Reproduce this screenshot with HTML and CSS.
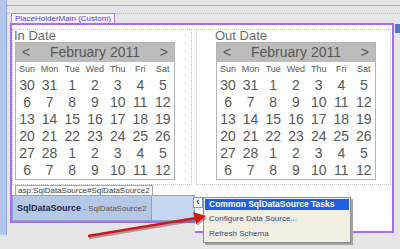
FILE: index.html
```html
<!DOCTYPE html>
<html lang="en">
<head>
    <meta charset="UTF-8">
    <title>Designer - PlaceHolderMain</title>
    <link rel="stylesheet" href="styles.css">
</head>
<body>
    <div class="desk">
        <div class="rail"></div>
        <div class="surface">
            <div class="ruler"></div>
            <div class="outer">
                <div class="ph-tab">PlaceHolderMain (Custom)</div>
                <div class="ph">
                    <div class="ph-body">
                        <div class="cell cell-in">
                            <div class="label">In Date</div>
                            <table class="cal">
                                <tr class="cal-head"><td colspan="7"><div class="cal-title"><span>&lt;</span><span>February 2011</span><span>&gt;</span></div></td></tr>
                                <tr class="cal-days"><td>Sun</td><td>Mon</td><td>Tue</td><td>Wed</td><td>Thu</td><td>Fri</td><td>Sat</td></tr>
                                <tr><td>30</td><td>31</td><td>1</td><td>2</td><td>3</td><td>4</td><td>5</td></tr>
                                <tr><td>6</td><td>7</td><td>8</td><td>9</td><td>10</td><td>11</td><td>12</td></tr>
                                <tr><td>13</td><td>14</td><td>15</td><td>16</td><td>17</td><td>18</td><td>19</td></tr>
                                <tr><td>20</td><td>21</td><td>22</td><td>23</td><td>24</td><td>25</td><td>26</td></tr>
                                <tr><td>27</td><td>28</td><td>1</td><td>2</td><td>3</td><td>4</td><td>5</td></tr>
                                <tr><td>6</td><td>7</td><td>8</td><td>9</td><td>10</td><td>11</td><td>12</td></tr>
                            </table>
                        </div>
                        <div class="cell cell-out">
                            <div class="label">Out Date</div>
                            <table class="cal">
                                <tr class="cal-head"><td colspan="7"><div class="cal-title"><span>&lt;</span><span>February 2011</span><span>&gt;</span></div></td></tr>
                                <tr class="cal-days"><td>Sun</td><td>Mon</td><td>Tue</td><td>Wed</td><td>Thu</td><td>Fri</td><td>Sat</td></tr>
                                <tr><td>30</td><td>31</td><td>1</td><td>2</td><td>3</td><td>4</td><td>5</td></tr>
                                <tr><td>6</td><td>7</td><td>8</td><td>9</td><td>10</td><td>11</td><td>12</td></tr>
                                <tr><td>13</td><td>14</td><td>15</td><td>16</td><td>17</td><td>18</td><td>19</td></tr>
                                <tr><td>20</td><td>21</td><td>22</td><td>23</td><td>24</td><td>25</td><td>26</td></tr>
                                <tr><td>27</td><td>28</td><td>1</td><td>2</td><td>3</td><td>4</td><td>5</td></tr>
                                <tr><td>6</td><td>7</td><td>8</td><td>9</td><td>10</td><td>11</td><td>12</td></tr>
                            </table>
                        </div>
                    </div>
                    <div class="ph-foot">
                        <div class="ds">
                            <div class="ds-tab">asp:SqlDataSource#SqlDataSource2</div>
                            <div class="ds-box">
                                <div class="ds-name"><b>SqlDataSource</b> - SqlDataSource2</div>
                            </div>
                        </div>
                        <div class="ph-rest"></div>
                    </div>
                </div>
            </div>
        </div>
    </div>

    <div class="edge-tag"></div>
    <div class="smart-tag">&lsaquo;</div>

    <div class="tasks">
        <div class="tasks-title">Common SqlDataSource Tasks</div>
        <div class="tasks-item">Configure Data Source...</div>
        <div class="tasks-item">Refresh Schema</div>
    </div>

    <svg class="arrow" width="400" height="249" viewBox="0 0 400 249">
        <g transform="translate(1 2)" fill="#6a5050" stroke="#6a5050" opacity="0.5">
            <line x1="88" y1="236" x2="196" y2="218" stroke-width="2.5"/>
            <polygon points="206,216 193,212 196,224" stroke="none"/>
        </g>
        <g fill="#d31616" stroke="#d31616">
            <line x1="88" y1="236" x2="196" y2="218" stroke-width="2.5"/>
            <polygon points="206,216 193,212 196,224" stroke="none"/>
        </g>
    </svg>
</body>
</html>
```

FILE: styles.css
```css
body {
    margin: 0;
    width: 400px;
    height: 249px;
    overflow: hidden;
    background-color: #e6e6e6;
    font-family: "Liberation Sans", Arial, sans-serif;
    position: relative;
}

.desk {
    display: flex;
    height: 249px;
}

.rail {
    width: 6px;
    height: 235px;
    background-color: #b3c7ec;
    border-right: 1px solid #8aa6da;
}

.surface {
    flex: 1;
    padding-top: 5px;
}

.ruler {
    height: 7px;
    border-top: 1px solid #97afdc;
}

.outer {
    display: flex;
    flex-direction: column;
    align-items: flex-start;
    border-top: 1px dotted #bdbdbd;
    padding-left: 3px;
}

.ph-tab {
    margin-top: -1px;
    height: 9px;
    line-height: 9px;
    padding: 0 3px;
    margin-left: 1px;
    font-size: 8px;
    color: #5a3cdc;
    background-color: #f7f4fd;
    border: 1px solid #b07cf2;
    border-bottom: none;
}

/* purple placeholder outline: body on top, stepped foot below */
.ph {
    width: 384px;
}

.ph-body {
    display: flex;
    gap: 4px;
    padding-top: 4px;
    background-color: #fff;
    border: 2px solid #ad6af2;
    border-bottom: none;
}

.ph-foot {
    display: flex;
    align-items: flex-start;
}

.ph-rest {
    flex: 1;
    height: 46px;
    background-color: #fff;
    border-right: 2px solid #ad6af2;
    border-bottom: 2px solid #ad6af2;
}

.cell {
    border: 1px dotted #c6c6c6;
    height: 154px;
}

.cell-in {
    width: 177px;
    padding-left: 1px;
}

.cell-out {
    width: 175px;
    padding-left: 18px;
}

.label {
    font-size: 13px;
    line-height: 12px;
    color: #6a6a6a;
    height: 12px;
}

.cal {
    border-collapse: collapse;
    table-layout: fixed;
    width: 160px;
    margin-left: 1px;
    border: 1px solid #b4b4b4;
    color: #585858;
}

.cal td {
    padding: 0;
    text-align: center;
    font-size: 14px;
    height: 17px;
    line-height: 17px;
}

.cal-head td {
    background-color: #bcbcbc;
    height: 19px;
    line-height: 19px;
}

.cal-title {
    display: flex;
    justify-content: space-between;
    padding: 0 6px;
}

.cal-days td {
    font-size: 9px;
    height: 15px;
    line-height: 15px;
}

.ds {
    width: 183px;
    height: 36px;
    display: flex;
    flex-direction: column;
    align-items: flex-start;
    background-color: #fff;
    border-left: 2px solid #ad6af2;
    border-bottom: 2px solid #ad6af2;
}

.ds-tab {
    margin-left: 3px;
    height: 9px;
    line-height: 9px;
    padding: 0 2px;
    font-size: 8px;
    color: #3a3a3a;
    background-color: #fff;
    border: 1px solid #a8a8a8;
    border-bottom: none;
}

.ds-box {
    width: 181px;
    height: 24px;
    background-color: #c5d7f1;
    border: 1px solid #8fa7cf;
}

.ds-name {
    width: 134px;
    height: 24px;
    line-height: 24px;
    padding-left: 4px;
    font-size: 8px;
    color: #555;
    background-color: #b5c9e6;
    border-right: 1px solid #8c9fbe;
}

.ds-name b {
    font-size: 9px;
    color: #1d2850;
}

.edge-tag {
    position: absolute;
    left: 395px;
    top: 24px;
    width: 5px;
    height: 9px;
    background-color: #4d78d0;
}

.smart-tag {
    position: absolute;
    left: 193px;
    top: 197px;
    width: 8px;
    height: 9px;
    line-height: 8px;
    text-align: center;
    font-size: 10px;
    font-weight: bold;
    color: #334;
    background-color: #fbfbff;
    border: 1px solid #7d98c8;
}

.tasks {
    position: absolute;
    left: 203px;
    top: 197px;
    width: 146px;
    height: 44px;
    background-color: #f1efe2;
    border: 1px solid #8d8d8d;
    box-shadow: 2px 2px 0 #a3a3a3;
}

.tasks-title {
    margin: 1px;
    height: 11px;
    line-height: 11px;
    padding-left: 4px;
    font-size: 8.5px;
    font-weight: bold;
    color: #fff;
    background-color: #1f5fe0;
}

.tasks-item {
    height: 15px;
    line-height: 15px;
    padding-left: 5px;
    font-size: 8px;
    color: #3b4775;
}

.arrow {
    position: absolute;
    left: 0;
    top: 0;
}
```
